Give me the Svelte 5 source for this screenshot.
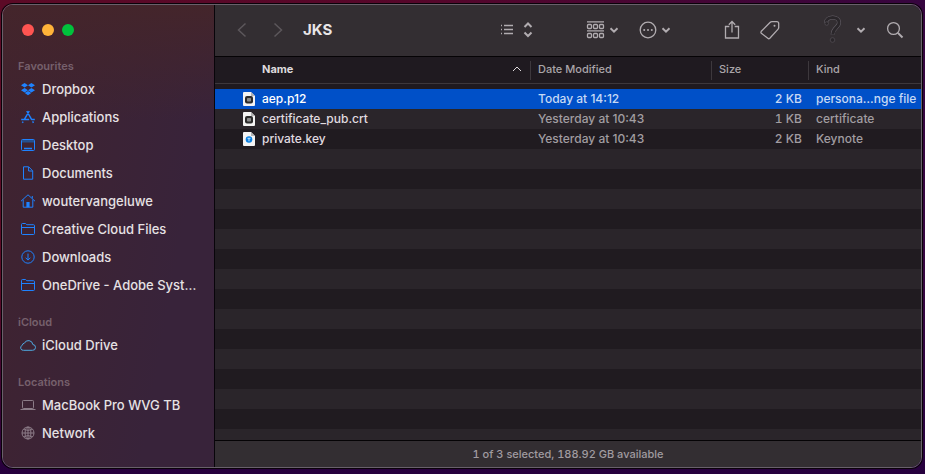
<script>
  const sections = [
    {
      title: 'Favourites',
      items: [
        { label: 'Dropbox', icon: 'dropbox' },
        { label: 'Applications', icon: 'apps' },
        { label: 'Desktop', icon: 'screen' },
        { label: 'Documents', icon: 'document' },
        { label: 'woutervangeluwe', icon: 'home' },
        { label: 'Creative Cloud Files', icon: 'folder' },
        { label: 'Downloads', icon: 'download' },
        { label: 'OneDrive - Adobe Syst…', icon: 'folder' }
      ]
    },
    { title: 'iCloud', items: [{ label: 'iCloud Drive', icon: 'cloud' }] },
    {
      title: 'Locations',
      items: [
        { label: 'MacBook Pro WVG TB', icon: 'laptop' },
        { label: 'Network', icon: 'globe' }
      ]
    }
  ];

  const files = [
    { name: 'aep.p12', date: 'Today at 14:12', size: '2 KB', kind: 'persona…nge file', type: 'cert' },
    { name: 'certificate_pub.crt', date: 'Yesterday at 10:43', size: '1 KB', kind: 'certificate', type: 'cert' },
    { name: 'private.key', date: 'Yesterday at 10:43', size: '2 KB', kind: 'Keynote', type: 'keynote' }
  ];

  let selected = $state(0);
</script>

{#snippet sideIcon(name)}
  <svg class="side-icon {name}" viewBox="0 0 16 16" aria-hidden="true">
    {#if name === 'dropbox'}
      <path class="solid" d="M4.6 2 1 4.3l3.6 2.3L8 4.3zM11.4 2 8 4.3l3.4 2.3L15 4.3zM4.6 6.900 1 9.200l3.600 2.300L8 9.200zM11.400 6.900 8 9.200l3.400 2.300L15 9.200zM4.700 12.100 8 14.200l3.300-2.100L8 9.900z" />
    {:else if name === 'apps'}
      <path class="thick" d="M6.800 2 11.800 10.800M9.200 2 4.400 10.400M1.200 10.600h8M11.600 10.600h3.200M3.200 12.600l-.9 1.200M12.600 12.400l.9 1.500" />
    {:else if name === 'screen'}
      <rect x="1.500" y="2.500" width="13" height="11" rx="1" />
      <path class="tint" d="M2 3h12v2.500H2z" />
      <path class="thick" d="M4 11.500h8" />
    {:else if name === 'document'}
      <path d="M3.500 1.800h5.200l4 4v8.400H3.500zM8.600 2v4h4" />
    {:else if name === 'home'}
      <path d="M1 8.200 8 1.800l7 6.400M3.200 6.600v7.600h9.600V6.600M12.300 5.400V3" />
      <path class="solid" d="M6.400 9h3.200v5.200H6.400z" />
    {:else if name === 'folder'}
      <path d="M1.500 13V3.500q0-1 1-1h3l1.300 1.200h6.700q1 0 1 1V12.500q0 1-1 1h-11q-1 0-1-1zM1.500 6.500h13" />
    {:else if name === 'download'}
      <circle cx="8" cy="8" r="6.200" />
      <path d="M8 4.600v6.400M5.600 8.700 8 11.100l2.400-2.400" />
    {:else if name === 'cloud'}
      <path d="M3.600 13.300h8.800a2.900 2.900 0 0 0 .4-5.800A4.400 4.400 0 0 0 4.400 6.200 2.300 2.300 0 0 0 2.300 8.300 2.600 2.600 0 0 0 3.600 13.300z" />
    {:else if name === 'laptop'}
      <rect x="2.500" y="3.500" width="11" height="8" rx=".8" />
      <path d="M.5 12.500h15" />
    {:else}
      <circle cx="8" cy="8" r="6" />
      <ellipse cx="8" cy="8" rx="2.900" ry="6" />
      <path d="M8 2v12M2 8h12M3.500 4.500q4.500 1.700 9 0M3.500 11.500q4.500-1.700 9 0" />
    {/if}
  </svg>
{/snippet}

{#snippet chevron()}
  <svg class="bold" width="10" height="18" viewBox="0 0 10 18" aria-hidden="true"><path d="M1.500 7.300 5 10.700l3.500-3.400" /></svg>
{/snippet}

<div class="desktop">
  <main class="window">
    <aside class="sidebar">
      <div class="lights">
        <button class="close" aria-label="Close"></button>
        <button class="minimise" aria-label="Minimise"></button>
        <button class="zoom" aria-label="Zoom"></button>
      </div>
      <nav aria-label="Sidebar">
        {#each sections as section}
          <section>
            <h2>{section.title}</h2>
            <ul>
              {#each section.items as item}
                <li>
                  <a href="#{item.icon}">{@render sideIcon(item.icon)}<span>{item.label}</span></a>
                </li>
              {/each}
            </ul>
          </section>
        {/each}
      </nav>
    </aside>

    <div class="content">
      <header class="toolbar">
        <div class="history">
          <button aria-label="Back">
            <svg width="10" height="18" viewBox="0 0 10 18"><path d="M8.500 2.500 1.500 9l7 6.500" /></svg>
          </button>
          <button aria-label="Forward">
            <svg width="10" height="18" viewBox="0 0 10 18"><path d="M1.500 2.500 8.500 9l-7 6.500" /></svg>
          </button>
        </div>
        <h1>JKS</h1>
        <div class="tools">
          <div class="cluster">
            <button class="view" aria-label="View as list">
              <svg width="14" height="18" viewBox="0 0 14 18"><path d="M1 4.500h1M4 4.500h9M1 8.500h1M4 8.500h9M1 12.500h1M4 12.500h9" /></svg>
              <svg class="bold" width="10" height="18" viewBox="0 0 10 18"><path d="M1.500 6 5 2.500 8.500 6M1.500 11.500 5 15l3.500-3.500" /></svg>
            </button>
          </div>
          <div class="cluster">
            <button aria-label="Group items">
              <svg width="19" height="18" viewBox="0 0 19 18">
                <path d="M1 .8h17M1 9.800h17" />
                <rect x="1.500" y="3.500" width="4" height="4" rx="1" /><rect x="7.500" y="3.500" width="4" height="4" rx="1" /><rect x="13.500" y="3.500" width="4" height="4" rx="1" />
                <rect x="1.500" y="12.500" width="4" height="4" rx="1" /><rect x="7.500" y="12.500" width="4" height="4" rx="1" /><rect x="13.500" y="12.500" width="4" height="4" rx="1" />
              </svg>
              {@render chevron()}
            </button>
            <button aria-label="Actions">
              <svg width="18" height="18" viewBox="0 0 18 18">
                <circle cx="9" cy="9" r="7.800" />
                <path class="dots" d="M5.200 9h.01M9 9h.01M12.800 9h.01" />
              </svg>
              {@render chevron()}
            </button>
          </div>
          <div class="cluster">
            <button aria-label="Share">
              <svg width="16" height="22" viewBox="0 0 16 22"><path d="M5.300 7.500H1.500V19h13V7.500h-3.800M8 13.500v-11M4.800 5.700 8 2.500l3.200 3.200" /></svg>
            </button>
            <button aria-label="Tags">
              <svg width="20" height="20" viewBox="0 0 20 20">
                <path d="M1.300 11.300 10 2.500q.8-.8 2-.8h4.800q1.900 0 1.900 1.900v3.800q0 1.200-.8 2L9.800 18.200q-1 1-2 0l-6.500-5q-.8-.9 0-1.900z" />
                <circle class="solid" cx="14.500" cy="5.800" r="1" />
              </svg>
            </button>
          </div>
          <div class="cluster last">
            <button class="help" aria-label="Help">
              <svg class="question" width="19" height="30" viewBox="0 0 19 30">
                <path class="rim" d="M3 8C3 .5 16.500 .5 16 8 15.700 12.500 10 12.500 9.700 19.500" />
                <path class="core" d="M3 8C3 .5 16.500 .5 16 8 15.700 12.500 10 12.500 9.700 19.500" />
                <circle cx="3.700" cy="8.500" r="1.800" />
                <circle cx="9.500" cy="25" r="2.300" />
              </svg>
              {@render chevron()}
            </button>
            <button aria-label="Search">
              <svg width="18" height="20" viewBox="0 0 18 20"><circle cx="7.500" cy="8.500" r="5.900" /><path class="handle" d="m11.900 12.900 4.600 4.600" /></svg>
            </button>
          </div>
        </div>
      </header>

      <div class="list">
        <table>
          <thead>
            <tr>
              <th class="name" aria-sort="ascending">
                <div>
                  <span>Name</span>
                  <svg width="10" height="8" viewBox="0 0 10 8" aria-hidden="true"><path d="m1 6 4-4 4 4" /></svg>
                </div>
              </th>
              <th class="date"><div>Date Modified</div></th>
              <th class="size"><div>Size</div></th>
              <th class="kind"><div>Kind</div></th>
            </tr>
          </thead>
          <tbody>
            {#each files as file, i}
              <tr class:selected={selected === i} onclick={() => (selected = i)}>
                <td class="name">
                  <div>
                    <svg class="file" width="12" height="14" viewBox="0 0 12 14" aria-hidden="true">
                      <path fill="#f4f4f4" d="M1 0h7l4 4v9q0 1-1 1H1q-1 0-1-1V1q0-1 1-1z" />
                      <path fill="#b4b4b4" d="M8 0v4h4z" />
                      {#if file.type === 'cert'}
                        <rect x="2" y="4" width="8" height="7.500" rx="2" fill="#2c2c2c" />
                        <rect x="4" y="6" width="4" height="3.500" rx=".8" fill="#8c8c8c" />
                      {:else}
                        <circle cx="6" cy="7.500" r="3.300" fill="#0a7fe0" />
                        <path d="M4.500 6.300h3M6 6.300v3" stroke="#c3e4ff" />
                      {/if}
                    </svg>
                    <span>{file.name}</span>
                  </div>
                </td>
                <td>{file.date}</td>
                <td class="size">{file.size}</td>
                <td>{file.kind}</td>
              </tr>
            {/each}
          </tbody>
        </table>
      </div>

      <footer>1 of 3 selected, 188.92 GB available</footer>
    </div>
  </main>
</div>

<style>
  :global(body) {
    margin: 0;
    background: #27003f;
  }

  .desktop {
    box-sizing: border-box;
    display: flex;
    min-height: 100vh;
    padding: 4px 3px 6px 2px;
    background:
      linear-gradient(180deg, transparent 60%, #26003e 100%),
      linear-gradient(90deg, #5c0a26 0%, #56062a 45%, #36053f 100%);
    font-family: Inter, 'Liberation Sans', sans-serif;
    font-size: 13px;
    color: #e6e1e4;
  }

  .window {
    flex: 1;
    display: flex;
    min-width: 0;
    border: 1px solid #68606a;
    border-radius: 11px;
    box-shadow: 0 0 0 1px #0a0209;
    overflow: hidden;
  }

  button {
    display: flex;
    align-items: center;
    gap: 4px;
    margin: 0;
    padding: 0;
    border: 0;
    background: none;
    color: inherit;
  }

  svg {
    display: block;
    flex: none;
    fill: none;
    stroke: currentColor;
  }

  .sidebar {
    flex: none;
    width: 211px;
    border-right: 1px solid #08050a;
    background:
      linear-gradient(180deg, #44252b 0%, rgba(60, 35, 47, 0) 25%),
      linear-gradient(100deg, #40232f 0%, #38233a 75%);
  }

  .lights {
    display: flex;
    gap: 8px;
    padding: 19px 19px 21px;
  }

  .lights button {
    width: 12px;
    height: 12px;
    border-radius: 50%;
  }

  .close { background: #ff5451; }
  .minimise { background: #ffb339; }
  .zoom { background: #00c23c; }

  section {
    margin-bottom: 14px;
  }

  h2 {
    margin: 0;
    padding-left: 15px;
    font-size: 11px;
    font-weight: 600;
    line-height: 18px;
    color: #76606c;
  }

  ul {
    margin: 0;
    padding: 0;
    list-style: none;
  }

  .sidebar a {
    display: flex;
    align-items: center;
    gap: 6px;
    height: 28px;
    padding-left: 17px;
    color: inherit;
    font-weight: 500;
    text-decoration: none;
    white-space: nowrap;
  }

  .side-icon {
    width: 16px;
    height: 16px;
    color: #1e82ff;
  }

  .cloud { color: #4fa9e0; }
  .laptop, .globe { color: #8c7c88; }
  .solid { fill: currentColor; stroke: none; }
  .tint { fill: #24508f; stroke: none; }
  .thick { stroke-width: 1.5; }

  .content {
    flex: 1;
    display: flex;
    flex-direction: column;
    min-width: 0;
  }

  .toolbar {
    display: flex;
    align-items: center;
    height: 50px;
    padding: 0 17px 1px 22px;
    border-bottom: 1px solid #050305;
    background: #332e32;
    color: #b1acb0;
  }

  .history {
    display: flex;
    gap: 26px;
    color: #5c575b;
  }

  .history svg { stroke-width: 1.5; }

  h1 {
    flex: 1;
    margin: 0 0 0 20px;
    font-size: 15px;
    font-weight: 700;
    line-height: 20px;
    color: #e8e5e7;
  }

  .tools {
    display: flex;
    gap: 53px;
  }

  .cluster {
    display: flex;
    align-items: center;
    gap: 20px;
  }

  .cluster svg { stroke-width: 1.3; }
  .cluster .bold { stroke-width: 2; }
  .cluster .dots { stroke-width: 2; stroke-linecap: round; }
  .cluster .handle { stroke-width: 2; }
  .last { margin-left: -10px; }
  .view { gap: 9px; }
  .help { gap: 14px; }
  .question .rim { stroke: #67626a; stroke-width: 4; }
  .question .core { stroke: #2a262a; stroke-width: 3; }
  .question circle { fill: #2a262a; stroke: #5b565d; stroke-width: .6; }

  .list {
    flex: 1;
    background:
      linear-gradient(#1f1a20, #1f1a20) 0 0 / 100% 32px no-repeat,
      repeating-linear-gradient(180deg, #201b20 0 20px, #2a252a 20px 40px) 0 32px;
  }

  table {
    width: 100%;
    table-layout: fixed;
    border-spacing: 0;
    font-size: 12px;
    font-weight: 500;
    color: #a19da1;
  }

  th {
    height: 26px;
    padding: 0;
    border-bottom: 1px solid #3d383d;
    font-size: 11px;
    font-weight: 500;
    text-align: left;
    color: #aaa5a9;
  }

  th div {
    height: 19px;
    padding-left: 7px;
    border-left: 1px solid #3d383d;
    line-height: 17px;
  }

  th.name div {
    display: flex;
    align-items: center;
    justify-content: space-between;
    height: 17px;
    padding: 0 8px 2px 47px;
    border-left: 0;
    font-weight: 700;
    color: #dedadd;
  }

  th.date { width: 181px; }
  th.size { width: 97px; }
  th.kind { width: 113px; }

  tbody::before {
    content: '';
    display: block;
    height: 5px;
  }

  td {
    height: 20px;
    padding: 0 0 0 8px;
    line-height: 20px;
    white-space: nowrap;
  }

  td.name {
    padding-left: 28px;
    color: #e0dce0;
  }

  td.name div {
    display: flex;
    align-items: center;
    gap: 7px;
  }

  .file { stroke: none; }

  td.size {
    padding-right: 6px;
    font-variant-numeric: tabular-nums;
    text-align: right;
  }

  .selected { background: #0050c8; }
  .selected td { color: #c6d9f5; }
  .selected td.name { color: #fff; }

  footer {
    height: 26px;
    border-top: 1px solid #050305;
    background: #332e32;
    color: #a09ba0;
    font-size: 11px;
    font-weight: 500;
    font-variant-numeric: tabular-nums;
    line-height: 26px;
    text-align: center;
  }
</style>
